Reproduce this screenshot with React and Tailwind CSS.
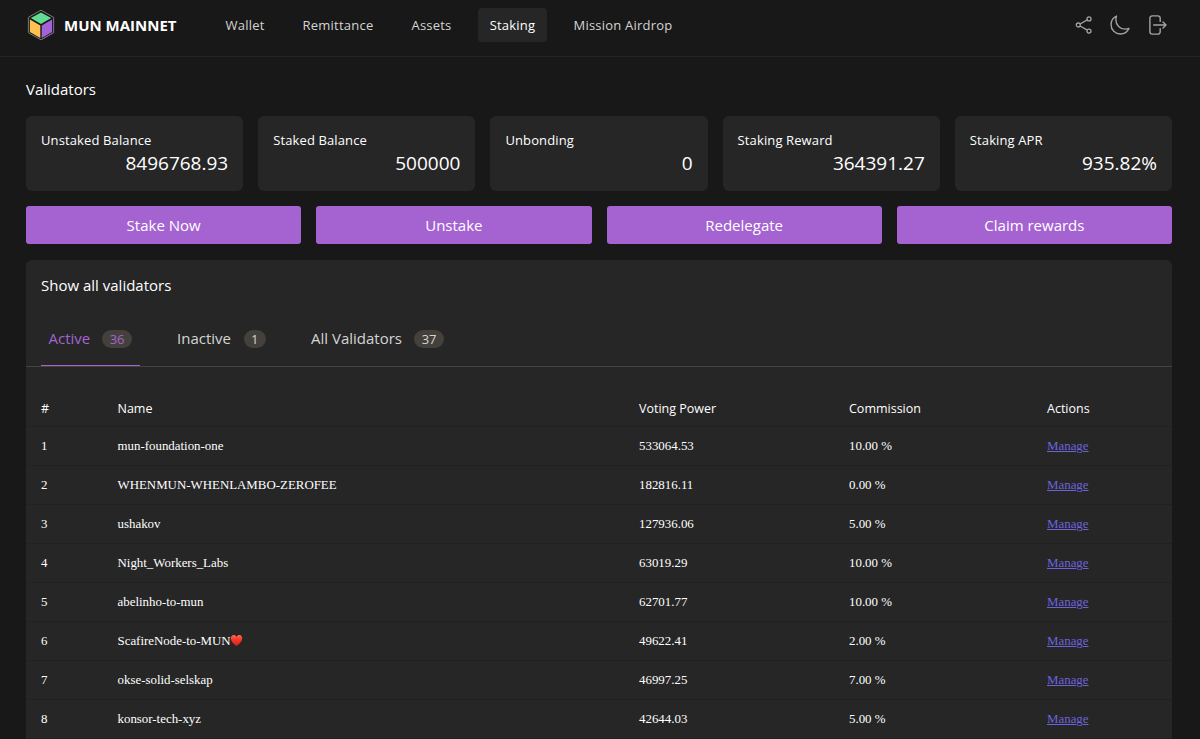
import React, { useState } from "react";
import { IoMoonOutline } from "react-icons/io5";

const navItems = [
  { name: "Wallet", width: "w-[62px]" },
  { name: "Remittance", width: "w-[94px]" },
  { name: "Assets", width: "w-[63px]" },
  { name: "Staking", width: "w-[69px]" },
  { name: "Mission Airdrop", width: "w-[122px]" },
];

const balances = [
  { label: "Unstaked Balance", value: "8496768.93" },
  { label: "Staked Balance", value: "500000" },
  { label: "Unbonding", value: "0" },
  { label: "Staking Reward", value: "364391.27" },
  { label: "Staking APR", value: "935.82%" },
];

const actions = ["Stake Now", "Unstake", "Redelegate", "Claim rewards"];

const tabs = [
  { name: "Active", count: 36, width: "w-[98.5px]" },
  { name: "Inactive", count: 1, width: "w-[104px]" },
  { name: "All Validators", count: 37, width: "w-[148px]" },
];

const validators = [
  { name: "mun-foundation-one", power: "533064.53", commission: "10.00 %" },
  { name: "WHENMUN-WHENLAMBO-ZEROFEE", power: "182816.11", commission: "0.00 %" },
  { name: "ushakov", power: "127936.06", commission: "5.00 %" },
  { name: "Night_Workers_Labs", power: "63019.29", commission: "10.00 %" },
  { name: "abelinho-to-mun", power: "62701.77", commission: "10.00 %" },
  { name: "ScafireNode-to-MUN", power: "49622.41", commission: "2.00 %", heart: true },
  { name: "okse-solid-selskap", power: "46997.25", commission: "7.00 %" },
  { name: "konsor-tech-xyz", power: "42644.03", commission: "5.00 %" },
];

const columns = "grid grid-cols-[76.5px_521.5px_210px_198px_1fr] pl-[15px]";

function Logo() {
  return (
    <svg width="28" height="32" viewBox="0 0 28 32" fill="none">
      <path d="M14 1.2 26.6 8.3V23.7L14 30.8 1.4 23.7V8.3Z" stroke="#77806a" strokeWidth="1" />
      <path d="M26.6 8.3V23.7L14 30.8" stroke="#7d5a91" strokeWidth="1" />
      <path d="M14 3.4 24.2 9 14 14.9 3.8 9Z" fill="#62dc94" />
      <path d="M2.9 10.4 13.3 16.4V28.9L2.9 23Z" fill="#ffc24f" />
      <path d="M25.1 10.4 14.7 16.4V28.9L25.1 23Z" fill="#a463d6" />
    </svg>
  );
}

function ShareIcon() {
  return (
    <svg width="18" height="18" viewBox="0 0 18 18" fill="none" stroke="currentColor" strokeWidth="1.3">
      <circle cx="3.3" cy="9" r="2" />
      <circle cx="14" cy="2.9" r="2" />
      <circle cx="14" cy="15.1" r="2" />
      <path d="M5 8 12.3 3.9M5 10l7.3 4.1" />
    </svg>
  );
}

function ExitIcon() {
  return (
    <svg width="18" height="20" viewBox="0 0 18 20" fill="none" stroke="currentColor" strokeWidth="1.4" strokeLinecap="round" strokeLinejoin="round">
      <path d="M11.2 6.4V3.2a2.3 2.3 0 0 0-2.3-2.3H3.2A2.3 2.3 0 0 0 .9 3.2v13.6a2.3 2.3 0 0 0 2.3 2.3h5.7a2.3 2.3 0 0 0 2.3-2.3v-3.2" />
      <path d="M4.7 10H17M14 7l3 3-3 3" />
    </svg>
  );
}

function Heart() {
  return (
    <svg width="13" height="13" viewBox="0 0 13 13" className="-ml-px inline-block align-[-2px]">
      <defs>
        <linearGradient id="heart" x1="0" y1="0" x2="0" y2="1">
          <stop offset="0" stopColor="#ff6a50" />
          <stop offset="0.4" stopColor="#f8392b" />
          <stop offset="1" stopColor="#d91f16" />
        </linearGradient>
      </defs>
      <path d="M6.5 3C5.6.9 3.5.7 2.2 1.5.6 2.5.4 4.6 1.3 6.5c1 2.1 3 3.9 5.2 5.5 2.2-1.6 4.2-3.4 5.2-5.5.9-1.9.7-4-.9-5C9.5.7 7.4.9 6.5 3Z" fill="url(#heart)" />
    </svg>
  );
}

function Header() {
  return (
    <header className="flex h-[57px] items-start border-b border-[#242424] pl-[26px] pr-[33px]">
      <div className="flex h-[50px] w-[188px] items-center pl-px">
        <Logo />
        <span className="ml-[9px] whitespace-nowrap text-[15px] font-bold text-white">MUN MAINNET</span>
      </div>
      <nav className="mt-2 flex gap-[15px]">
        {navItems.map(item => (
          <a
            key={item.name}
            href="#"
            className={`flex h-[34px] items-center justify-center whitespace-nowrap rounded pt-0.5 text-[13px] font-medium tracking-[0.22px] ${item.width} ${item.name === "Staking" ? "bg-[#262626] text-white" : "text-[#d4d4d4]"}`}
          >
            {item.name}
          </a>
        ))}
      </nav>
      <div className="ml-auto flex h-[50px] items-center text-[#a3a3a3]">
        <ShareIcon />
        <IoMoonOutline className="ml-[16px] h-[22px] w-[22px]" />
        <span className="ml-[18px]"><ExitIcon /></span>
      </div>
    </header>
  );
}

function App() {
  const [activeTab, setActiveTab] = useState("Active");

  return (
    <div className="h-[739px] overflow-hidden bg-[#181818] font-['Open_Sans',sans-serif] text-white">
      <Header />

      <main className="pl-[26px] pr-[28px]">
        <h1 className="pt-[21px] text-[15px] leading-[22px]">Validators</h1>

        {/* Balances */}
        <div className="mt-[16px] grid grid-cols-5 gap-[15px]">
          {balances.map(item => (
            <div key={item.label} className="h-[75px] rounded-md bg-[#262626] px-[15px] pt-[15px]">
              <p className="text-[13px] leading-[19px] tracking-[0.12px]">{item.label}</p>
              <p className="text-right text-[19px] leading-[26px]">{item.value}</p>
            </div>
          ))}
        </div>

        {/* Buttons */}
        <div className="mt-[15px] grid grid-cols-4 gap-[15px]">
          {actions.map(action => (
            <button key={action} className="h-[38px] rounded-[3px] bg-[#a463d1] text-[15px]">{action}</button>
          ))}
        </div>

        {/* Validators list */}
        <section className="mt-[16px] h-[500px] rounded-t-md bg-[#262626]">
          <h2 className="pl-[15px] pt-[14px] text-[15px] leading-[22px]">Show all validators</h2>

          <div className="mt-[15px] flex h-[56px] gap-[30px] border-b border-[#44423e] pl-[15px]">
            {tabs.map(tab => (
              <button
                key={tab.name}
                onClick={() => setActiveTab(tab.name)}
                className={`flex items-center justify-between whitespace-nowrap border-b px-[7.5px] pt-px text-[15px] ${tab.width} ${activeTab === tab.name ? "border-[#a463d1] text-[#a463d1]" : "border-transparent text-[#d4d4d4]"}`}
              >
                {tab.name}
                <span className="rounded-full bg-[#44403b] px-[7.5px] text-[13px] leading-[18px]">{tab.count}</span>
              </button>
            ))}
          </div>

          <div className={`${columns} mt-[21px] h-[39px] items-center border-b border-[#212121] pt-[4px] text-[12.5px]`}>
            <span>#</span>
            <span>Name</span>
            <span>Voting Power</span>
            <span>Commission</span>
            <span>Actions</span>
          </div>
          {validators.map((validator, index) => (
            <div key={validator.name} className={`${columns} h-[39px] items-center border-b border-[#212121] pt-[2px] font-['Liberation_Serif',serif] text-[12.9px]`}>
              <span>{index + 1}</span>
              <span>{validator.name}{validator.heart && <Heart />}</span>
              <span>{validator.power}</span>
              <span>{validator.commission}</span>
              <a href="#" className="text-[#6c63dc] underline">Manage</a>
            </div>
          ))}
        </section>
      </main>
    </div>
  );
}

export default App;
